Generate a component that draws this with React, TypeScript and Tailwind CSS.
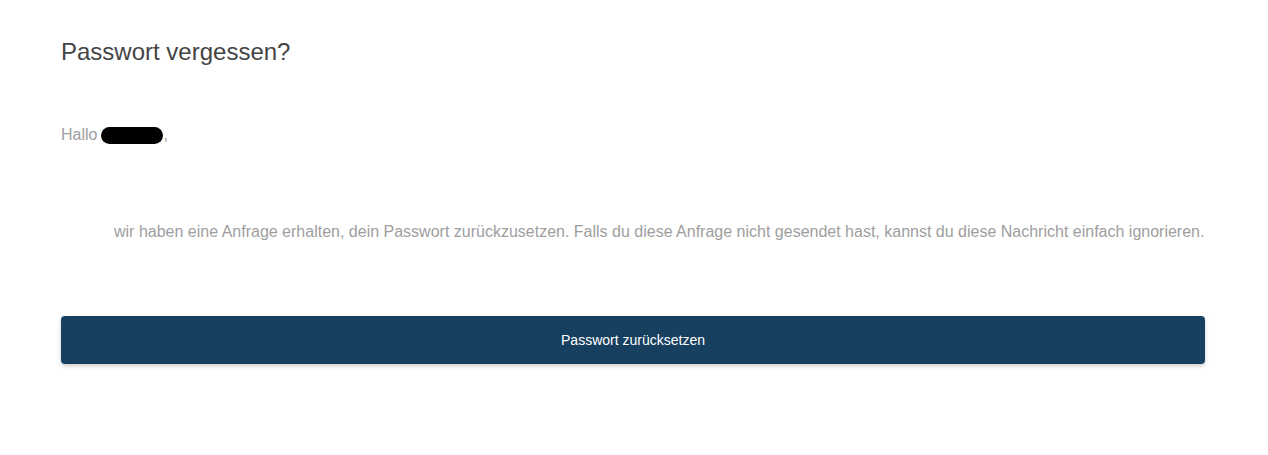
export default function App() {
  return (
    <div
      className="min-h-[455px] w-full bg-white"
      style={{ fontFamily: '"Liberation Sans", Arial, sans-serif' }}
    >
      <div className="ml-[61px] w-[1144px] pt-[38px]">
        <h1 className="text-[24px] leading-[28px] text-[#444444]">Passwort vergessen?</h1>

        <p className="mt-[60px] flex h-[18px] items-center text-[16px] leading-[18px] text-[#9e9e9e]">
          Hallo
          <span className="ml-[4px] inline-block h-[17px] w-[62px] rounded-full bg-black" />
          ,
        </p>

        <p className="mt-[78px] pl-[53px] text-[16px] leading-[20px] text-[#9e9e9e]">
          wir haben eine Anfrage erhalten, dein Passwort zurückzusetzen. Falls du diese Anfrage nicht gesendet hast, kannst du diese Nachricht einfach ignorieren.
        </p>

        <button className="mt-[74px] flex h-[48px] w-full items-center justify-center rounded-[4px] bg-[#173f5f] text-[14px] text-white shadow-[0_2px_4px_rgba(0,0,0,0.2)]">
          Passwort zurücksetzen
        </button>
      </div>
    </div>
  )
}
